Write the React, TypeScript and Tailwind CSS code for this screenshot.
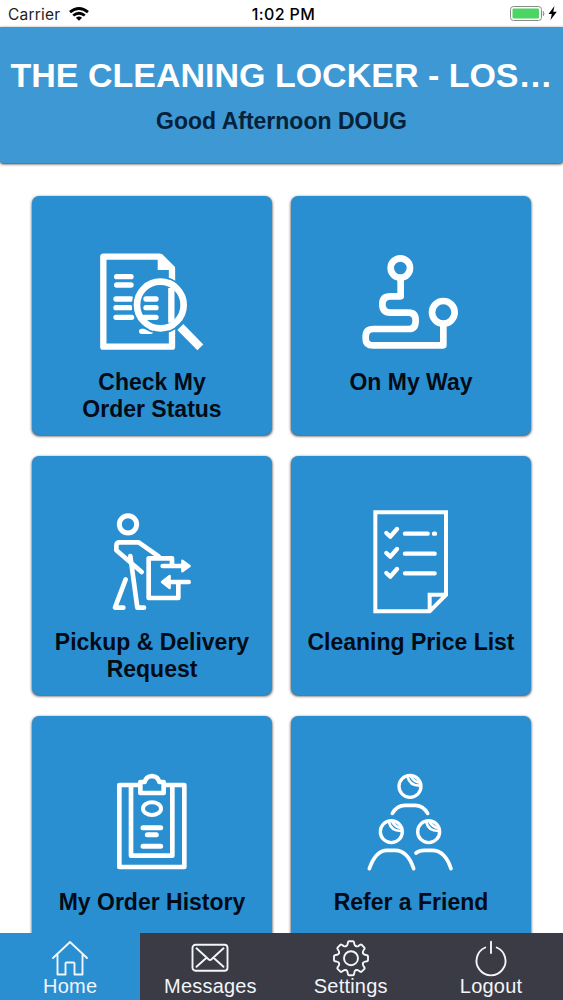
import type { ReactNode } from 'react';

interface Tile {
  lines: string[];
  viewBox: string;
  icon: ReactNode;
}

interface Tab {
  label: string;
  active?: boolean;
  icon: ReactNode;
}

const Friend = ({ x, y }: { x: number; y: number }) => (
  <g transform={`translate(${x} ${y})`} strokeWidth="10">
    <circle r="33" />
    <path d="M-7 -28C-3 -10 12 -2 29 -2M3 -29C9 -19 17 -12 29 -11" strokeWidth="8" />
  </g>
);

const tiles: Tile[] = [
  {
    lines: ['Check My', 'Order Status'],
    viewBox: '202 166 360 342',
    icon: (
      <>
        <path d="M442 412V468H236V198H405L442 234V270" strokeWidth="19" />
        <path d="M399 190H412L450 228V238H399Z" fill="white" stroke="none" />
        <path d="M276 258H319M276 283H319" strokeWidth="16" />
        <path d="M274 325H319M274 351H316M274 380H321M364 325H394M364 351H394M358 380H394M351 422H378" strokeWidth="16" />
        <path d="M440 292V396" strokeWidth="19" strokeLinecap="butt" />
        <circle cx="407" cy="343" r="83" className="stroke-[#2a8fd0]" strokeWidth="5" />
        <circle cx="407" cy="343" r="70" strokeWidth="20" />
        <path d="M467 409L527 470" strokeWidth="25" strokeLinecap="butt" />
      </>
    ),
  },
  {
    lines: ['On My Way'],
    viewBox: '198 166 360 342',
    icon: (
      <g strokeWidth="20">
        <circle cx="346" cy="232" r="29" />
        <circle cx="475" cy="365" r="34" />
        <path d="M347 265V317H316Q292 317 292 341Q292 366 316 366H371Q392 366 392 390Q392 415 371 415H265Q242 415 242 438V444Q242 464 264 464H475V403" />
      </g>
    ),
  },
  {
    lines: ['Pickup & Delivery', 'Request'],
    viewBox: '202 168 360 342',
    icon: (
      <g strokeWidth="14">
        <circle cx="310" cy="223" r="26" strokeWidth="15" />
        <path d="M402 319L342 277H285Q275 277 275 287V301L351 366M317 318L338 473H358M303 388L271 473H296" />
        <path d="M442 342V325H372V444H461V400" />
        <path d="M414 348H480M436 396H492" strokeLinecap="round" />
        <path d="M473 332L495 348L473 364ZM435 378L412 396L435 414Z" fill="white" strokeWidth="7" />
      </g>
    ),
  },
  {
    lines: ['Cleaning Price List'],
    viewBox: '198 168 360 342',
    icon: (
      <>
        <path d="M271 187H483V435L434 484H271ZM434 482V434H482" strokeWidth="12" strokeLinejoin="miter" />
        <path d="M304 249L316 260L336 237M304 309L316 320L336 297M304 369L316 380L336 357" strokeWidth="13" />
        <path d="M360 251H428M447 251H450M360 311H449M360 370H449" strokeWidth="13" />
      </>
    ),
  },
  {
    lines: ['My Order History'],
    viewBox: '202 183 360 342',
    icon: (
      <g strokeWidth="14">
        <path d="M343 240H284V486H479V240H420" />
        <path d="M319 242V452H443V242" />
        <path d="M347 264V231H360Q364 214 382 213Q400 214 404 231H417V264Z" />
        <ellipse cx="382" cy="311" rx="27" ry="19" strokeWidth="12" />
        <path d="M355 368H408M368 389H395M355 424H408" strokeWidth="15" />
      </g>
    ),
  },
  {
    lines: ['Refer a Friend'],
    viewBox: '198 183 360 342',
    icon: (
      <g strokeWidth="11">
        <Friend x={375} y={244} />
        <Friend x={319} y={380} />
        <Friend x={431} y={380} />
        <path d="M322 325Q336 301 360 301H390Q414 301 428 325M253 491Q272 436 306 436H330Q368 436 386 491M393 444Q403 436 418 436H442Q480 436 498 491" />
      </g>
    ),
  },
];

const gearAngles = [0, 45, 90, 135, 180, 225, 270, 315];

const tabs: Tab[] = [
  {
    label: 'Home',
    active: true,
    icon: <path d="M2 18L19 2L36 18M6.500 15V34.500H14.500V23.500Q14.500 22.500 15.500 22.500H22.500Q23.500 22.500 23.500 23.500V34.500H31.500V15" />,
  },
  {
    label: 'Messages',
    icon: (
      <>
        <rect x="1.500" y="4.800" width="35" height="26" rx="3" />
        <path d="M5.500 8.300L17.500 19.300Q19 20.800 20.500 19.300L32.500 8.300M5.500 26.800L15.500 17.800M32.500 26.800L22.500 17.800" />
      </>
    ),
  },
  {
    label: 'Settings',
    icon: (
      <g transform="translate(19 18.200)">
        <circle r="7" />
        {gearAngles.map((angle) => (
          <path
            key={angle}
            d="M-4.970 -12Q-3.600 -12.600 -3.400 -14L-3 -16Q-2.800 -17 -2 -17H2Q2.800 -17 3 -16L3.400 -14Q3.600 -12.600 4.970 -12"
            transform={`rotate(${angle})`}
          />
        ))}
      </g>
    ),
  },
  {
    label: 'Logout',
    icon: <path d="M19 1.800V13M13.300 7.500A14.500 14.500 0 1 0 24.700 7.500" />,
  },
];

function StatusBar() {
  return (
    <div className="grid h-[27px] shrink-0 grid-cols-3 items-center px-2 pt-0.5 font-['Inter',sans-serif] text-black">
      <div className="flex items-center gap-[9px] text-[15.5px] text-[#222]">
        <span className="w-[52px] whitespace-nowrap tracking-[0.2px]">Carrier</span>
        <svg viewBox="0 0 20 14" className="mb-0.5 h-3.5 w-5" fill="none" stroke="black" strokeWidth="2.800">
          <path d="M1 5.200Q10 -2.200 19 5.200M4.200 8.500Q10 3.900 15.800 8.500" />
          <path d="M6.900 10.800Q10 8.300 13.100 10.800L10 13.800Z" fill="black" stroke="none" />
        </svg>
      </div>
      <span className="pb-px pl-1 text-center text-[16px] font-medium tracking-[0.4px]">1:02 PM</span>
      <div className="-mr-0.5 flex items-center justify-end gap-[3px] pb-[3px]">
        <svg viewBox="0 0 36 16" className="h-4 w-9" fill="none">
          <rect x="1.500" y="1.500" width="31" height="14" rx="3" stroke="#8b8b8b" />
          <rect x="3.500" y="3.500" width="26.500" height="10" rx="1" fill="#4bd663" />
          <path d="M34.200 6V11Q36 8.500 34.200 6Z" fill="#8b8b8b" stroke="#8b8b8b" strokeWidth="0.500" />
        </svg>
        <svg viewBox="0 0 9 14" className="h-3.5 w-[9px]">
          <path d="M6.500 0L.5 8H3.800L2.500 14L8.800 5.700H5.200Z" />
        </svg>
      </div>
    </div>
  );
}

function TileCard({ tile }: { tile: Tile }) {
  return (
    <button className="flex h-[239px] w-60 flex-col items-center rounded-[7px] bg-[#2a8fd0] pt-[50px] shadow-[0_1px_3px_rgba(0,0,0,0.85)]">
      <svg
        viewBox={tile.viewBox}
        className="h-[114px] w-[120px] shrink-0"
        fill="none"
        stroke="white"
        strokeLinecap="round"
        strokeLinejoin="round"
      >
        {tile.icon}
      </svg>
      <span className="mt-[9px] text-[23px] leading-[27px] font-bold whitespace-nowrap text-[#020b16]">
        {tile.lines.map((line) => (
          <span key={line} className="block">{line}</span>
        ))}
      </span>
    </button>
  );
}

export default function App() {
  return (
    <div className="flex h-[1000px] w-[563px] flex-col overflow-hidden bg-white font-['Liberation_Sans',Arial,sans-serif]">
      <StatusBar />

      {/* Header */}
      <header className="h-[136px] shrink-0 rounded-b-[3px] bg-[#3d98d3] pt-7 text-center shadow-[0_1px_3px_rgba(0,0,0,0.85)]">
        <h1 className="text-[34px] leading-10 font-bold whitespace-nowrap text-white">THE CLEANING LOCKER - LOS…</h1>
        <p className="mt-3 text-[23px] leading-7 font-bold text-[#06213a]">Good Afternoon DOUG</p>
      </header>

      {/* Menu tiles */}
      <main className="min-h-0 flex-1 overflow-hidden pt-[33px] pl-8">
        <div className="grid w-[499px] grid-cols-2 gap-x-[19px] gap-y-[21px]">
          {tiles.map((tile) => (
            <TileCard key={tile.lines[0]} tile={tile} />
          ))}
        </div>
      </main>

      {/* Bottom tabs */}
      <nav className="flex h-[67px] shrink-0 bg-[#3a3b44]">
        {tabs.map((tab) => (
          <button
            key={tab.label}
            className={`flex w-[140.300px] flex-col items-center pt-[7px] text-[#f2f5fa] ${tab.active ? 'bg-[#2a8fd0]' : 'bg-[#3a3b44]'}`}
          >
            <svg
              viewBox="0 0 38 37"
              className="h-[37px] w-[38px] shrink-0"
              fill="none"
              stroke="currentColor"
              strokeWidth="1.900"
              strokeLinecap="round"
              strokeLinejoin="round"
            >
              {tab.icon}
            </svg>
            <span className="-mt-0.5 text-[20px] leading-[22px] tracking-[0.2px]">{tab.label}</span>
          </button>
        ))}
      </nav>
    </div>
  );
}
